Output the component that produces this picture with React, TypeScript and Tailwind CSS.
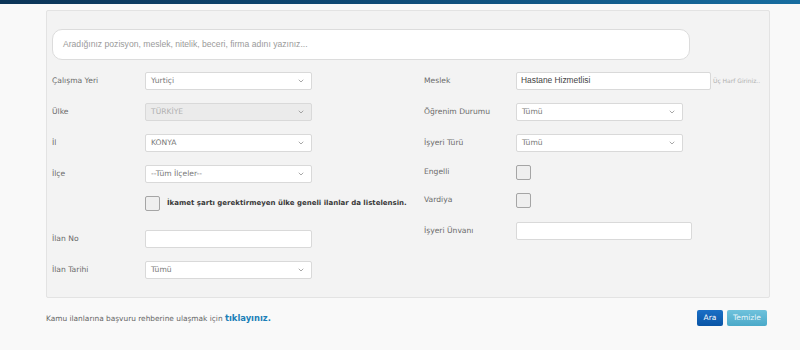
import { ChevronDown } from "lucide-react";

// ──────────────────────────────────────────────
// Small form pieces
// ──────────────────────────────────────────────

function Select({
  value,
  width,
  disabled = false,
}: {
  value: string;
  width: string;
  disabled?: boolean;
}) {
  return (
    <div
      className={`flex items-center justify-between h-[18px] ${width} border border-[#d9d9d9] rounded-[2px] pl-[5px] pr-[6px] ${
        disabled ? "bg-[#ebebeb] text-[#b0b0b0]" : "bg-white text-[#777]"
      }`}
    >
      <span className="text-[7.6px] leading-none">{value}</span>
      <ChevronDown size={8} strokeWidth={2.2} className="text-[#888]" />
    </div>
  );
}

function TextBox({ width, value }: { width: string; value?: string }) {
  return (
    <div
      className={`flex items-center h-[18px] ${width} bg-white border border-[#d9d9d9] rounded-[2px] px-[4px]`}
    >
      {value && (
        <span className="text-[8.4px] leading-none text-[#444] font-['Liberation_Sans',sans-serif]">
          {value}
        </span>
      )}
    </div>
  );
}

function Check() {
  return (
    <div className="w-[15px] h-[15px] bg-[#efefef] border border-[#a5a5a5] rounded-[2px]" />
  );
}

function Row({
  label,
  labelW,
  h,
  children,
}: {
  label?: string;
  labelW: string;
  h: string;
  children: React.ReactNode;
}) {
  return (
    <div className={`flex items-center ${h}`}>
      <div className={`${labelW} flex-shrink-0 text-[7.6px] text-[#6a6a6a]`}>
        {label}
      </div>
      {children}
    </div>
  );
}

// ──────────────────────────────────────────────
// Page
// ──────────────────────────────────────────────

export default function App() {
  return (
    <div className="w-[800px] h-[350px] bg-[#f9f9f9] font-['DejaVu_Sans',Verdana,sans-serif] overflow-hidden">
      {/* top strip */}
      <div className="h-[4px] bg-gradient-to-r from-[#0c3558] via-[#0f4c78] to-[#176da0]" />

      <div className="pt-[6px] pl-[46px]">
        {/* ── Filter panel ── */}
        <div className="w-[724px] h-[288px] bg-[#f3f3f3] border border-[#e3e3e3] rounded-[2px] pt-[18px] pl-[5px]">
          <div className="w-[638px] h-[31px] bg-white border border-[#dcdcdc] rounded-[10px] flex items-center pl-[10px]">
            <span className="text-[8.6px] text-[#9a9a9a] font-['Liberation_Sans',Arial,sans-serif]">
              Aradığınız pozisyon, meslek, nitelik, beceri, firma adını
              yazınız...
            </span>
          </div>

          <div className="flex mt-[11px]">
            {/* left column */}
            <div className="w-[372px] flex flex-col">
              <Row label="Çalışma Yeri" labelW="w-[93px]" h="h-[19px]">
                <Select value="Yurtiçi" width="w-[167px]" />
              </Row>
              <div className="h-[12px]" />
              <Row label="Ülke" labelW="w-[93px]" h="h-[19px]">
                <Select value="TÜRKİYE" width="w-[167px]" disabled />
              </Row>
              <div className="h-[12px]" />
              <Row label="İl" labelW="w-[93px]" h="h-[19px]">
                <Select value="KONYA" width="w-[167px]" />
              </Row>
              <div className="h-[12px]" />
              <Row label="İlçe" labelW="w-[93px]" h="h-[19px]">
                <Select value="--Tüm İlçeler--" width="w-[167px]" />
              </Row>
              <div className="h-[12px]" />
              <Row labelW="w-[93px]" h="h-[16px]">
                <Check />
                <span className="ml-[7px] text-[7px] font-bold text-[#3a3a3a] whitespace-nowrap">
                  İkamet şartı gerektirmeyen ülke geneli ilanlar da listelensin.
                </span>
              </Row>
              <div className="h-[18px]" />
              <Row label="İlan No" labelW="w-[93px]" h="h-[19px]">
                <TextBox width="w-[167px]" />
              </Row>
              <div className="h-[12px]" />
              <Row label="İlan Tarihi" labelW="w-[93px]" h="h-[19px]">
                <Select value="Tümü" width="w-[167px]" />
              </Row>
            </div>

            {/* right column */}
            <div className="flex flex-col">
              <Row label="Meslek" labelW="w-[92px]" h="h-[19px]">
                <TextBox width="w-[195px]" value="Hastane Hizmetlisi" />
                <span className="ml-[2px] text-[6px] text-[#b0b0b0] whitespace-nowrap">
                  Üç Harf Giriniz..
                </span>
              </Row>
              <div className="h-[12px]" />
              <Row label="Öğrenim Durumu" labelW="w-[92px]" h="h-[19px]">
                <Select value="Tümü" width="w-[167px]" />
              </Row>
              <div className="h-[12px]" />
              <Row label="İşyeri Türü" labelW="w-[92px]" h="h-[19px]">
                <Select value="Tümü" width="w-[167px]" />
              </Row>
              <div className="h-[12px]" />
              <Row label="Engelli" labelW="w-[92px]" h="h-[16px]">
                <Check />
              </Row>
              <div className="h-[12px]" />
              <Row label="Vardiya" labelW="w-[92px]" h="h-[16px]">
                <Check />
              </Row>
              <div className="h-[13px]" />
              <Row label="İşyeri Ünvanı" labelW="w-[92px]" h="h-[19px]">
                <TextBox width="w-[176px]" />
              </Row>
            </div>
          </div>
        </div>

        {/* ── Footer ── */}
        <div className="w-[721px] flex items-center justify-between mt-[12px]">
          <p className="text-[7.4px] text-[#666]">
            Kamu ilanlarına başvuru rehberine ulaşmak için{" "}
            <span className="font-bold text-[8.4px] text-[#1b7fb8]">
              tıklayınız.
            </span>
          </p>
          <div className="flex gap-[4px]">
            <button className="h-[16px] w-[26px] rounded-[2px] bg-gradient-to-b from-[#1a6fc6] to-[#0a55a6] text-white text-[7.5px]">
              Ara
            </button>
            <button className="h-[16px] w-[40px] rounded-[2px] bg-gradient-to-b from-[#6fc2dc] to-[#4aa9c9] text-[#eaf6fa] text-[7.5px]">
              Temizle
            </button>
          </div>
        </div>
      </div>
    </div>
  );
}
